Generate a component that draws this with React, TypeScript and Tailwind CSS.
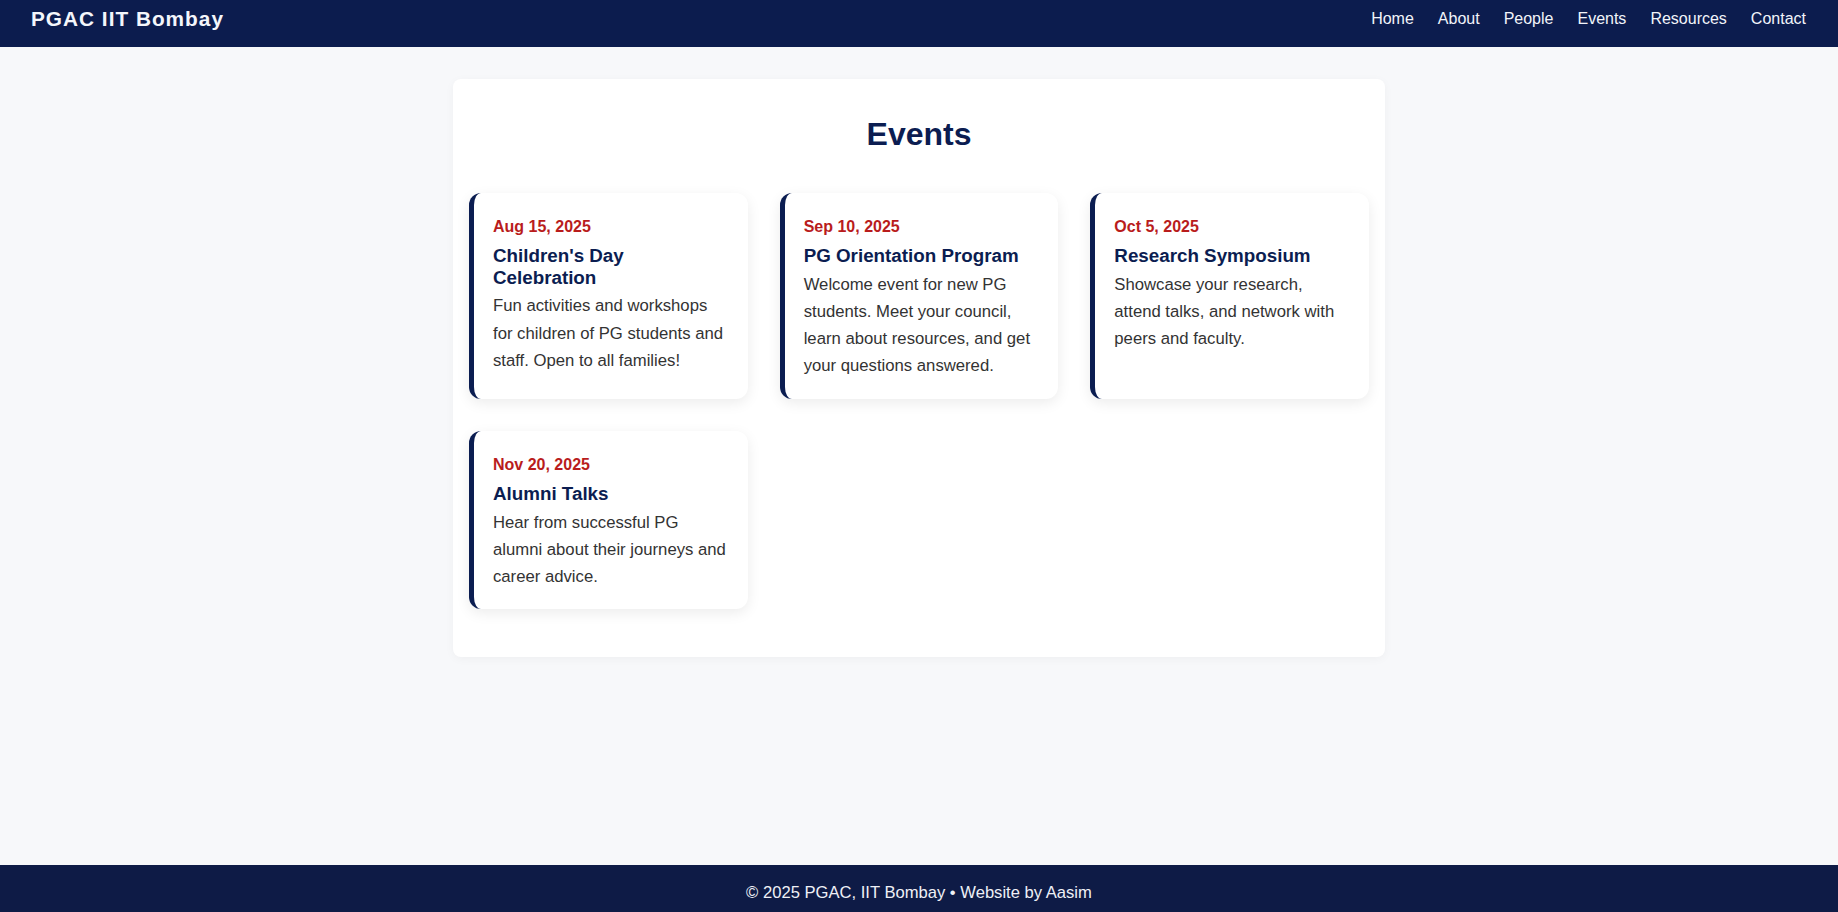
import React from "react";

const events = [
  {
    date: "Aug 15, 2025",
    title: "Children's Day Celebration",
    desc: "Fun activities and workshops for children of PG students and staff. Open to all families!",
  },
  {
    date: "Sep 10, 2025",
    title: "PG Orientation Program",
    desc: "Welcome event for new PG students. Meet your council, learn about resources, and get your questions answered.",
  },
  {
    date: "Oct 5, 2025",
    title: "Research Symposium",
    desc: "Showcase your research, attend talks, and network with peers and faculty.",
  },
  {
    date: "Nov 20, 2025",
    title: "Alumni Talks",
    desc: "Hear from successful PG alumni about their journeys and career advice.",
  },
];

const links = ["Home", "About", "People", "Events", "Resources", "Contact"];

export default function App() {
  return (
    <div
      className="min-h-screen flex flex-col bg-[#f7f8fa]"
      style={{ fontFamily: '"Liberation Sans", Arial, sans-serif' }}
    >
      <header className="h-[47px] shrink-0 bg-[#0c1c4e] flex items-start justify-between pl-[31px] pr-8">
        <div className="mt-[7px] text-[20.8px] leading-[1.15] font-bold tracking-[1px] text-[#f4f6fb]">
          PGAC IIT Bombay
        </div>
        <nav className="mt-[10px] flex gap-6 text-[16px] leading-[1.15] text-[#f2f4fa]">
          {links.map((l) => (
            <a key={l} href="#" className="no-underline">
              {l}
            </a>
          ))}
        </nav>
      </header>

      <main className="flex-1 pt-8">
        <section className="mx-auto w-[932px] bg-white rounded-lg shadow-[0_2px_10px_rgba(0,0,0,0.04)] px-4 pt-[37px] pb-12">
          <h2 className="text-center text-[32px] leading-[1.15] font-bold text-[#0b1d51] mb-[40px]">
            Events
          </h2>
          <div className="grid grid-cols-3 gap-8">
            {events.map((e) => (
              <div
                key={e.title}
                className="bg-white rounded-xl border-l-[5px] border-[#0b1d51] pt-[25px] pb-[19px] pl-[19px] pr-5 shadow-[0_4px_14px_rgba(0,0,0,0.08)]"
              >
                <div className="text-[16px] leading-[1.15] font-bold text-[#b91c1c] mb-[9px]">
                  {e.date}
                </div>
                <h3 className="text-[18.8px] leading-[1.15] font-bold text-[#0b1d51] mb-1">
                  {e.title}
                </h3>
                <p className="text-[16.7px] leading-[27.2px] text-[#333333]">{e.desc}</p>
              </div>
            ))}
          </div>
        </section>
      </main>

      <footer className="h-[47px] shrink-0 bg-[#0e1b46] text-center pt-[18px] text-[16.6px] leading-[1.15] text-[#eef0f6]">
        © 2025 PGAC, IIT Bombay • Website by Aasim
      </footer>
    </div>
  );
}
